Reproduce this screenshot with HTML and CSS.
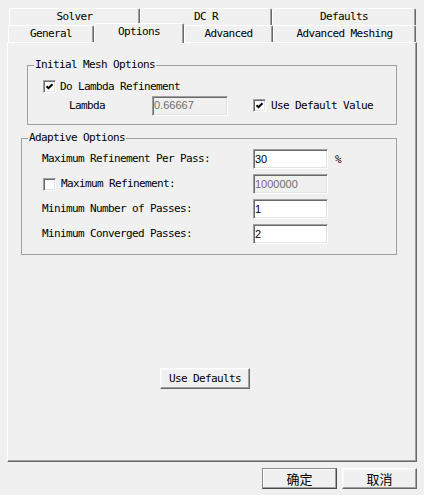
FILE: index.html
```html
<!DOCTYPE html>
<html>
<head>
<meta charset="utf-8">
<link rel="stylesheet" href="styles.css">
</head>
<body>
<div class="dialog">
  <div class="tabrow back">
    <div class="tab w-solver">Solver</div>
    <div class="tab w-dcr">DC R</div>
    <div class="tab w-defaults">Defaults</div>
  </div>
  <div class="tabrow front">
    <div class="tab w-general">General</div>
    <div class="tab active w-options">Options</div>
    <div class="tab w-advanced">Advanced</div>
    <div class="tab w-meshing">Advanced Meshing</div>
  </div>
  <div class="panel">
    <fieldset class="group g1">
      <legend>Initial Mesh Options</legend>
      <div class="g1-body">
        <div class="crow r1">
          <span class="check"><svg viewBox="0 0 11 11" width="11" height="11"><polyline points="2.5,5.2 4.5,7.2 8.5,3.2" fill="none" stroke="#000" stroke-width="2"/></svg></span>
          <span class="ctext gap4">Do Lambda Refinement</span>
        </div>
        <div class="crow r2">
          <span class="lambda">Lambda</span>
          <input class="field disabled lam" type="text" value="0.66667" disabled>
          <span class="check ml25"><svg viewBox="0 0 11 11" width="11" height="11"><polyline points="2.5,5.2 4.5,7.2 8.5,3.2" fill="none" stroke="#000" stroke-width="2"/></svg></span>
          <span class="ctext gap5">Use Default Value</span>
        </div>
      </div>
    </fieldset>
    <fieldset class="group g2">
      <legend>Adaptive Options</legend>
      <div class="g2-body">
        <div class="frow">
          <span class="label">Maximum Refinement Per Pass:</span>
          <input class="field" type="text" value="30">
          <span class="unit">%</span>
        </div>
        <div class="frow">
          <span class="label cl"><span class="check ml1"></span><span class="ctext gap5">Maximum Refinement:</span></span>
          <input class="field disabled" type="text" value="1000000" disabled>
        </div>
        <div class="frow">
          <span class="label">Minimum Number of Passes:</span>
          <input class="field" type="text" value="1">
        </div>
        <div class="frow">
          <span class="label">Minimum Converged Passes:</span>
          <input class="field" type="text" value="2">
        </div>
      </div>
    </fieldset>
    <div class="defrow"><button class="btn wide">Use Defaults</button></div>
  </div>
  <div class="footer">
    <button class="btn cjk default">确定</button>
    <button class="btn cjk">取消</button>
  </div>
</div>
</body>
</html>
```
FILE: styles.css
```css
* { box-sizing: border-box; }
html, body { margin: 0; padding: 0; }
body {
  width: 424px;
  height: 495px;
  overflow: hidden;
  background: #f0f0f0;
  color: #000;
  font-family: "DejaVu Sans Mono", monospace;
  font-size: 11px;
  letter-spacing: -0.62px;
}
.dialog { padding: 8px 7px 0 7px; }

.tabrow { display: flex; align-items: flex-start; height: 17px; }
.tabrow.back { margin-left: 2px; }
.tabrow.front { margin-left: 1px; }
.tab {
  height: 17px;
  line-height: 16px;
  text-align: center;
  white-space: nowrap;
  background: #f0f0f0;
  border-top: 1px solid #fff;
  border-left: 1px solid #fff;
  border-right: 1px solid #696969;
  box-shadow: inset -1px 0 0 #a0a0a0;
  border-top-left-radius: 2px;
  border-top-right-radius: 2px;
}
.tab.active {
  height: 20px;
  margin-top: -2px;
  margin-bottom: -1px;
  position: relative;
  z-index: 1;
}
.w-solver { width: 131px; }
.w-dcr { width: 132px; }
.w-defaults { width: 144px; }
.w-general { width: 86px; }
.w-options { width: 90px; }
.w-advanced { width: 89px; }
.w-meshing { width: 143px; }

.panel {
  height: 420px;
  padding-top: 16px;
  border-top: 1px solid #fff;
  border-left: 1px solid #fff;
  border-right: 1px solid #696969;
  border-bottom: 1px solid #696969;
  box-shadow: inset -1px -1px 0 #a0a0a0;
}

.group {
  margin: 0;
  padding: 0;
  min-width: 0;
  border: 1px solid #a0a0a0;
}
.group legend {
  padding: 0 1px;
  margin-left: 6px;
  line-height: 12px;
  height: 12px;
}
.g1 { margin-left: 19px; width: 370px; }
.g2 { margin-left: 13px; margin-top: 7px; width: 376px; }

.g1-body { padding: 7px 0 8px 15px; }
.crow { display: flex; align-items: center; }
.r1 { height: 17px; }
.r2 { height: 21px; }
.lambda { margin-left: 26px; width: 83px; }
.ctext { white-space: nowrap; }
.gap4 { margin-left: 4px; }
.gap5 { margin-left: 5px; }
.ml25 { margin-left: 25px; }
.ml1 { margin-left: 1px; }

.check {
  display: inline-block;
  flex: none;
  width: 13px;
  height: 13px;
  background: #fff;
  border: 1px solid;
  border-color: #a0a0a0 #fff #fff #a0a0a0;
  box-shadow: inset 1px 1px 0 #696969, inset -1px -1px 0 #e3e3e3;
}
.check svg { display: block; }

.field {
  -webkit-appearance: none;
  appearance: none;
  margin: 0;
  width: 75px;
  height: 20px;
  padding: 0 0 1px 1px;
  background: #fff;
  color: #000;
  font-family: "Liberation Sans", Arial, sans-serif;
  font-size: 11px;
  letter-spacing: 0;
  border: 1px solid;
  border-color: #a0a0a0 #fff #fff #a0a0a0;
  box-shadow: inset 1px 1px 0 #696969, inset -1px -1px 0 #e3e3e3;
  outline: none;
}
.field.disabled { background: #f0f0f0; color: #6d6d6d; -webkit-text-fill-color: #6d6d6d; opacity: 1; }
.field.lam { width: 76px; }

.g2-body {
  padding: 5px 0 10px 20px;
  display: flex;
  flex-direction: column;
  gap: 5px;
}
.frow {
  display: grid;
  grid-template-columns: 211px 75px auto;
  height: 20px;
  align-items: center;
}
.unit { margin-left: 7px; }
.label { white-space: nowrap; line-height: 20px; }
.label.cl { display: flex; align-items: center; }

.defrow { margin-top: 113px; padding-left: 152px; }
.btn {
  margin: 0;
  padding: 0;
  height: 21px;
  background: #f0f0f0;
  color: #000;
  font-family: "DejaVu Sans Mono", monospace;
  font-size: 11px;
  letter-spacing: -0.62px;
  border: 1px solid;
  border-color: #fff #696969 #696969 #fff;
  box-shadow: inset -1px -1px 0 #a0a0a0, inset 1px 1px 0 #f8f8f8;
}
.btn.wide { width: 90px; }
.footer {
  margin-top: 6px;
  display: flex;
  justify-content: flex-end;
  gap: 5px;
}
.btn.cjk {
  width: 75px;
  font-family: "Noto Sans CJK SC", sans-serif;
  font-size: 13px;
  letter-spacing: 0;
  line-height: 17px;
}
.btn.default {
  border-color: #8a8a8a #4a4a4a #4a4a4a #8a8a8a;
  box-shadow: inset -1px -1px 0 #a0a0a0, inset 1px 1px 0 #fff;
}
```
